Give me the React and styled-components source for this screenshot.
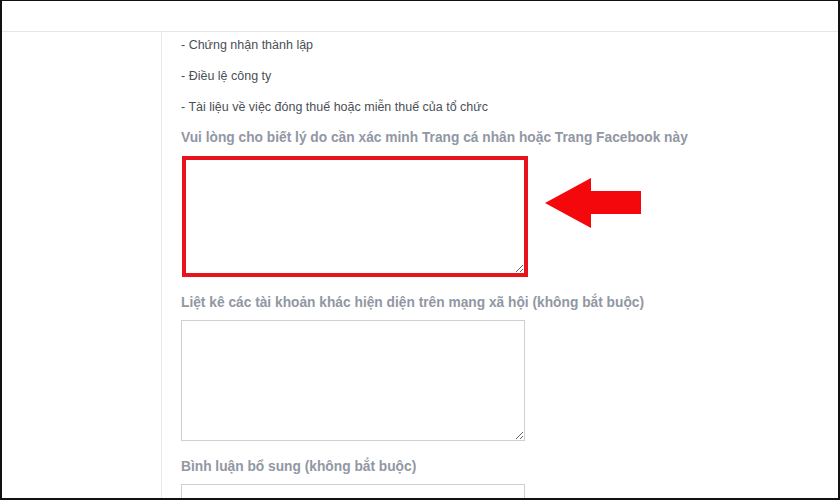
import styled, { createGlobalStyle } from "styled-components";

const GlobalStyle = createGlobalStyle`
  html, body {
    margin: 0;
    padding: 0;
    background: #fff;
  }
  body {
    font-family: "Liberation Sans", Arial, sans-serif;
  }
`;

const Frame = styled.div`
  width: 840px;
  height: 500px;
  box-sizing: border-box;
  border: 2px solid #111;
  border-top-width: 1px;
  overflow: hidden;
  display: flex;
  flex-direction: column;
  background: #fff;
`;

const Header = styled.div`
  height: 30px;
  flex-shrink: 0;
  border-bottom: 1px solid #e6e6e6;
`;

const Body = styled.div`
  flex: 1;
  display: flex;
`;

const Sidebar = styled.aside`
  width: 159px;
  flex-shrink: 0;
  border-right: 1px solid #e9e9e9;
`;

const Content = styled.main`
  flex: 1;
  padding: 5px 0 0 19px;
`;

const ListItem = styled.p`
  margin: 0 0 15px;
  font-size: 12.5px;
  line-height: 16px;
  color: #4b4f56;
`;

const Label = styled.label`
  display: block;
  margin: ${(p) => (p.$first ? "0" : "18px")} 0 9px;
  font-size: 13.75px;
  line-height: 16px;
  font-weight: bold;
  color: #9197a3;
`;

const Row = styled.div`
  display: flex;
  align-items: flex-start;
  gap: 17px;
`;

const TextArea = styled.textarea`
  display: block;
  box-sizing: border-box;
  width: ${(p) => (p.$highlight ? "346px" : "344px")};
  height: 121px;
  margin: ${(p) => (p.$highlight ? "1px 0 0 1px" : "0")};
  padding: 4px;
  border: ${(p) => (p.$highlight ? "4px solid #e8141b" : "1px solid #cfcfcf")};
  border-radius: 0;
  background: #fff;
  font-family: inherit;
  outline: none;
`;

const Arrow = styled.svg`
  display: block;
  margin-top: 23px;
  flex-shrink: 0;
`;

export default function App() {
  return (
    <>
      <GlobalStyle />
      <Frame>
        <Header />
        <Body>
          <Sidebar />
          <Content>
            <ListItem>- Chứng nhận thành lập</ListItem>
            <ListItem>- Điều lệ công ty</ListItem>
            <ListItem>- Tài liệu về việc đóng thuế hoặc miễn thuế của tổ chức</ListItem>

            <Label $first>
              Vui lòng cho biết lý do cần xác minh Trang cá nhân hoặc Trang Facebook này
            </Label>
            <Row>
              <TextArea $highlight />
              <Arrow width="97" height="50" viewBox="0 0 97 50">
                <polygon
                  points="0,25 46,0 46,13 96,13 96,36 46,36 46,50"
                  fill="#f5080c"
                />
              </Arrow>
            </Row>

            <Label>Liệt kê các tài khoản khác hiện diện trên mạng xã hội (không bắt buộc)</Label>
            <TextArea />

            <Label>Bình luận bổ sung (không bắt buộc)</Label>
            <TextArea />
          </Content>
        </Body>
      </Frame>
    </>
  );
}
